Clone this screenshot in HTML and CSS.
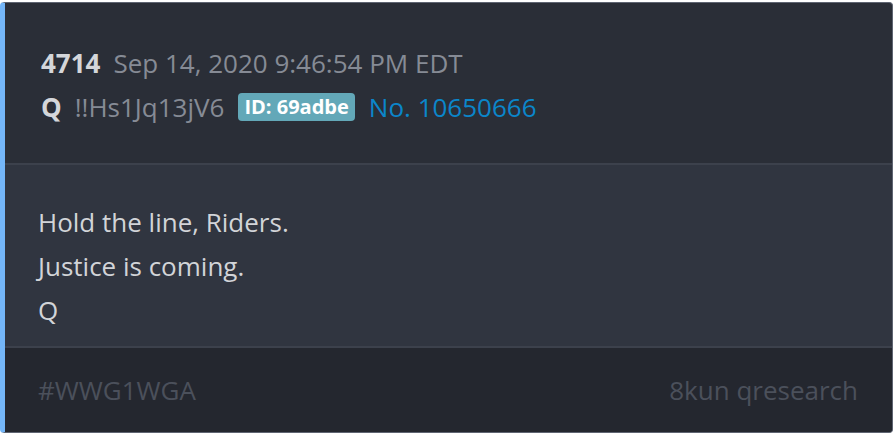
FILE: index.html
```html
<!DOCTYPE html>
<html>
<head>
<meta charset="utf-8">
<link rel="stylesheet" href="styles.css">
</head>
<body>
<div class="card">
  <div class="head">
    <div class="row">
      <span class="num">4714</span>
      <span class="date">Sep 14, 2020 9:46:54 PM EDT</span>
    </div>
    <div class="row">
      <span class="name">Q</span>
      <span class="trip">!!Hs1Jq13jV6</span>
      <span class="badge">ID: 69adbe</span>
      <span class="no">No. 10650666</span>
    </div>
  </div>
  <div class="body">
    <p>Hold the line, Riders.</p>
    <p>Justice is coming.</p>
    <p>Q</p>
  </div>
  <div class="foot">
    <span>#WWG1WGA</span>
    <span>8kun qresearch</span>
  </div>
</div>
</body>
</html>
```
FILE: styles.css
```css
html, body {
  margin: 0;
  background: #ffffff;
}
body {
  padding: 2px 1px 1px 0;
  font-family: "Open Sans", "Noto Sans", sans-serif;
}
.card {
  height: 431px;
  box-sizing: border-box;
  border: 1px solid #5f6572;
  border-left: 5px solid #74b6f8;
  border-radius: 4px;
  overflow: hidden;
  display: flex;
  flex-direction: column;
  background: #2a2e37;
}
.head {
  height: 162px;
  box-sizing: border-box;
  padding: 42px 0 0 36px;
  display: flex;
  flex-direction: column;
  gap: 8px;
  border-bottom: 2px solid #3c414c;
}
.row {
  display: flex;
  align-items: center;
  height: 36px;
}
.num, .name {
  font-weight: 700;
  font-size: 26px;
  color: #d4d6da;
  margin-right: 13px;
}
.date, .trip {
  font-size: 26px;
  color: #868b95;
}
.trip { margin-right: 14px; }
.badge {
  background: #63a8b8;
  color: #ffffff;
  font-weight: 700;
  font-size: 20px;
  line-height: 27px;
  border-radius: 4px;
  padding: 0 6px 1px;
  margin-right: 14px;
}
.no {
  font-size: 26px;
  color: #0b86ca;
}
.body {
  height: 183px;
  box-sizing: border-box;
  background: #303540;
  padding: 35px 0 0 33px;
  border-bottom: 2px solid #3c414c;
}
.body p {
  margin: 0;
  font-size: 26px;
  line-height: 44px;
  color: #d2d4d8;
}
.foot {
  flex: 1;
  background: #24272f;
  display: flex;
  justify-content: space-between;
  align-items: center;
  padding: 0 34px 0 33px;
  font-size: 26px;
  color: #4b505b;
}
```
